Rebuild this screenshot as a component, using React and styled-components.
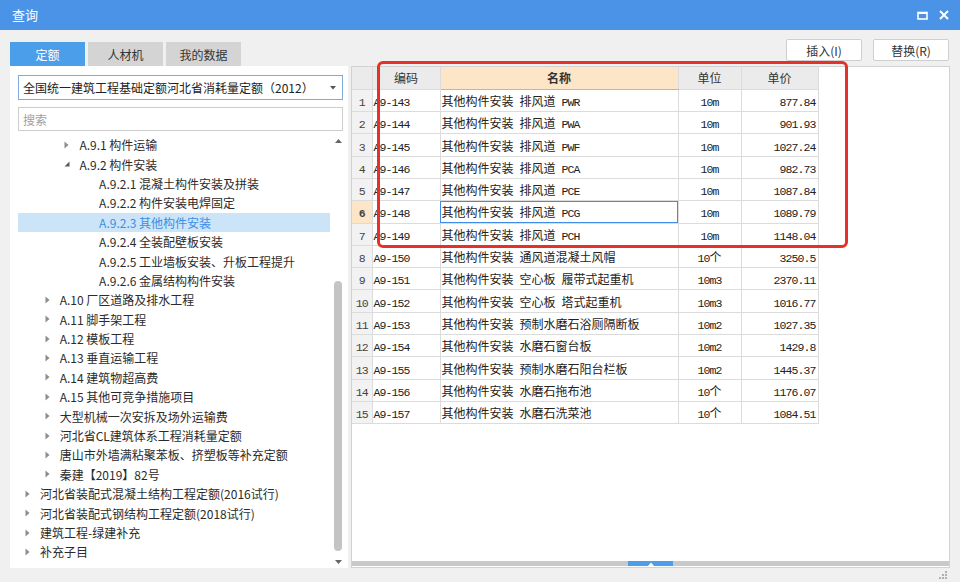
import React from "react";
import styled, { createGlobalStyle } from "styled-components";

const GlobalStyle = createGlobalStyle`
  html, body {
    margin: 0;
    padding: 0;
    background: #f0f0f0;
  }
  body {
    font-family: "Noto Sans CJK SC", "Noto Sans", sans-serif;
    font-size: 12px;
    color: #333;
  }
  * {
    box-sizing: border-box;
  }
`;

const Window = styled.div`
  position: relative;
  width: 960px;
  height: 582px;
  display: flex;
  flex-direction: column;
  background: #f0f0f0;
  overflow: hidden;
`;

const TitleBar = styled.header`
  flex: 0 0 30px;
  display: flex;
  align-items: center;
  padding: 0 11px 0 12px;
  background: #4a93e6;
  color: #fff;
  h1 {
    flex: 1;
    margin: 0;
    font-size: 13px;
    font-weight: 400;
    line-height: 30px;
  }
  .controls {
    display: flex;
    align-items: center;
    gap: 11px;
  }
`;

const Body = styled.div`
  flex: 1;
  display: flex;
  flex-direction: column;
  padding: 0 10px 0 10px;
`;

const TopRow = styled.div`
  flex: 0 0 36px;
  display: flex;
  justify-content: space-between;
`;

const Tabs = styled.nav`
  display: flex;
  align-items: flex-end;
  gap: 3px;
`;

const Tab = styled.div`
  width: 75px;
  height: 24px;
  display: flex;
  align-items: center;
  justify-content: center;
  font-size: 12px;
  background: ${(p) => (p.$active ? "#4a9eea" : "#d4d4d4")};
  color: ${(p) => (p.$active ? "#fff" : "#333")};
`;

const Actions = styled.div`
  display: flex;
  gap: 11px;
  padding-top: 9px;
  padding-right: 1px;
`;

const Button = styled.button`
  width: 76px;
  height: 22px;
  padding: 0;
  border: 1px solid #cfcfcf;
  border-radius: 2px;
  background: #fff;
  color: #333;
  font-family: inherit;
  font-size: 12px;
`;

const Main = styled.div`
  flex: 0 0 502px;
  display: flex;
  gap: 3px;
`;

const LeftPanel = styled.section`
  flex: 0 0 338px;
  display: flex;
  flex-direction: column;
  padding: 9px 5px 0 8px;
  background: #fff;
`;

const Select = styled.div`
  height: 25px;
  display: flex;
  align-items: center;
  justify-content: space-between;
  padding: 0 6px 0 4px;
  border: 1px solid #7eaae2;
  color: #222;
  font-size: 12px;
  svg {
    flex: 0 0 auto;
  }
`;

const Search = styled.div`
  height: 24px;
  margin-top: 7px;
  display: flex;
  align-items: center;
  padding-left: 4px;
  border: 1px solid #cdcdcd;
  color: #a0a0a0;
  font-size: 12px;
`;

const TreeArea = styled.div`
  flex: 1;
  display: flex;
  margin-top: 4px;
  min-height: 0;
`;

const TreeList = styled.ul`
  flex: 1;
  margin: 0;
  padding: 0;
  list-style: none;
  overflow: hidden;
`;

const TreeRow = styled.li`
  height: 19.4px;
  display: flex;
  align-items: center;
  margin-right: 3px;
  padding-left: ${(p) => p.$level * 19.7}px;
  background: ${(p) => (p.$selected ? "#cce4f7" : "transparent")};
  color: ${(p) => (p.$selected ? "#3a8ee6" : "#2b2b2b")};
  font-size: 12px;
  white-space: nowrap;
  .arrow {
    flex: 0 0 22px;
    display: flex;
    align-items: center;
    padding-left: 7px;
  }
`;

const VScroll = styled.div`
  flex: 0 0 10px;
  display: flex;
  flex-direction: column;
  align-items: center;
  .track {
    flex: 1;
    width: 100%;
    display: flex;
    flex-direction: column;
    justify-content: flex-end;
    padding: 0 1px 5px;
  }
  .thumb {
    height: 270px;
    border-radius: 4px;
    background: #c4c4c4;
  }
  .btn {
    flex: 0 0 12px;
    display: flex;
    align-items: center;
    justify-content: center;
  }
`;

const RightPanel = styled.section`
  flex: 1;
  display: flex;
  flex-direction: column;
  border: 1px solid #d2d2d2;
  background: #fff;
`;

const GridWrap = styled.div`
  flex: 1;
`;

const Grid = styled.table`
  width: 466px;
  border-collapse: collapse;
  table-layout: fixed;
  tr {
    height: 22.3px;
  }
  th,
  td {
    padding: 0;
    border: 1px solid #dcdcdc;
    white-space: nowrap;
    overflow: hidden;
    font-size: 12px;
  }
  tr:first-child th {
    border-top: 0;
  }
  tr > :first-child {
    border-left: 0;
  }
`;

const HeadCell = styled.th`
  background: ${(p) => (p.$sorted ? "#fde5c8" : "#ebebeb")};
  border-bottom-color: ${(p) => (p.$sorted ? "#9dbbe6" : "#dcdcdc")} !important;
  font-weight: ${(p) => (p.$sorted ? 700 : 400)};
  color: #333;
  text-align: center;
`;

const NumCell = styled.td`
  background: ${(p) => (p.$current ? "#fde5c8" : "#f2f2f2")};
  color: #444;
  text-align: center;
  font-weight: ${(p) => (p.$current ? 700 : 400)};
`;

const Cell = styled.td`
  text-align: ${(p) => p.$align || "left"};
  padding: ${(p) =>
    p.$align === "right" ? "0 2px 0 0" : p.$align === "center" ? "0" : "0 0 0 1px"} !important;
  color: #222;
  outline: ${(p) => (p.$selected ? "1px solid #3f8de6" : "none")};
  outline-offset: -1px;
`;

const Latin = styled.span`
  font-family: "Liberation Mono", "DejaVu Sans Mono", monospace;
  font-size: 11.5px;
  letter-spacing: -0.9px;
`;

const HScroll = styled.div`
  flex: 0 0 5px;
  margin: 0 0 1px;
  display: flex;
  justify-content: center;
  background: #c9c9c9;
  .handle {
    width: 45px;
    display: flex;
    align-items: center;
    justify-content: center;
    background: #4a9eea;
  }
`;

const Footer = styled.div`
  flex: 1;
  display: flex;
  justify-content: flex-end;
  align-items: flex-end;
  padding: 0 3px 3px 0;
`;

const Annotation = styled.div`
  position: absolute;
  left: 377px;
  top: 61px;
  width: 471px;
  height: 187px;
  border: 3px solid #e5312a;
  border-radius: 6px;
  pointer-events: none;
`;

const tree = [
  { level: 2, arrow: "closed", text: "A.9.1 构件运输" },
  { level: 2, arrow: "open", text: "A.9.2 构件安装" },
  { level: 3, text: "A.9.2.1 混凝土构件安装及拼装" },
  { level: 3, text: "A.9.2.2 构件安装电焊固定" },
  { level: 3, text: "A.9.2.3 其他构件安装", selected: true },
  { level: 3, text: "A.9.2.4 全装配壁板安装" },
  { level: 3, text: "A.9.2.5 工业墙板安装、升板工程提升" },
  { level: 3, text: "A.9.2.6 金属结构构件安装" },
  { level: 1, arrow: "closed", text: "A.10 厂区道路及排水工程" },
  { level: 1, arrow: "closed", text: "A.11 脚手架工程" },
  { level: 1, arrow: "closed", text: "A.12 模板工程" },
  { level: 1, arrow: "closed", text: "A.13 垂直运输工程" },
  { level: 1, arrow: "closed", text: "A.14 建筑物超高费" },
  { level: 1, arrow: "closed", text: "A.15 其他可竞争措施项目" },
  { level: 1, arrow: "closed", text: "大型机械一次安拆及场外运输费" },
  { level: 1, arrow: "closed", text: "河北省CL建筑体系工程消耗量定额" },
  { level: 1, arrow: "closed", text: "唐山市外墙满粘聚苯板、挤塑板等补充定额" },
  { level: 1, arrow: "closed", text: "秦建【2019】82号" },
  { level: 0, arrow: "closed", text: "河北省装配式混凝土结构工程定额(2016试行)" },
  { level: 0, arrow: "closed", text: "河北省装配式钢结构工程定额(2018试行)" },
  { level: 0, arrow: "closed", text: "建筑工程-绿建补充" },
  { level: 0, arrow: "closed", text: "补充子目" },
];

const rows = [
  ["A9-143", "其他构件安装 排风道 PWR", "10m", "877.84"],
  ["A9-144", "其他构件安装 排风道 PWA", "10m", "901.93"],
  ["A9-145", "其他构件安装 排风道 PWF", "10m", "1027.24"],
  ["A9-146", "其他构件安装 排风道 PCA", "10m", "982.73"],
  ["A9-147", "其他构件安装 排风道 PCE", "10m", "1087.84"],
  ["A9-148", "其他构件安装 排风道 PCG", "10m", "1089.79"],
  ["A9-149", "其他构件安装 排风道 PCH", "10m", "1148.04"],
  ["A9-150", "其他构件安装 通风道混凝土风帽", "10个", "3250.5"],
  ["A9-151", "其他构件安装 空心板 履带式起重机", "10m3", "2370.11"],
  ["A9-152", "其他构件安装 空心板 塔式起重机", "10m3", "1016.77"],
  ["A9-153", "其他构件安装 预制水磨石浴厕隔断板", "10m2", "1027.35"],
  ["A9-154", "其他构件安装 水磨石窗台板", "10m2", "1429.8"],
  ["A9-155", "其他构件安装 预制水磨石阳台栏板", "10m2", "1445.37"],
  ["A9-156", "其他构件安装 水磨石拖布池", "10个", "1176.07"],
  ["A9-157", "其他构件安装 水磨石洗菜池", "10个", "1084.51"],
];

// ascii runs get the narrow grid font, the rest stays in the CJK face
const mixed = (str) =>
  str
    .split(/([\x20-\x7e]+)/)
    .filter(Boolean)
    .map((part, i) =>
      /^[\x20-\x7e]+$/.test(part) ? <Latin key={i}>{part}</Latin> : <span key={i}>{part}</span>
    );

const Arrow = ({ type }) => {
  if (type === "open") {
    return (
      <svg width="6" height="6" viewBox="0 0 6 6">
        <polygon points="5.5,0.5 5.5,5.5 0.5,5.5" fill="#5a5a5a" />
      </svg>
    );
  }
  if (type === "closed") {
    return (
      <svg width="5" height="8" viewBox="0 0 5 8">
        <polygon points="0.5,0.5 4.5,4 0.5,7.5" fill="#8c8c8c" />
      </svg>
    );
  }
  return null;
};

export default function App() {
  return (
    <>
      <GlobalStyle />
      <Window>
        <TitleBar>
          <h1>查询</h1>
          <div className="controls">
            <svg width="11" height="9" viewBox="0 0 11 9">
              <rect x="1" y="1.5" width="9" height="6.5" fill="none" stroke="#fff" strokeWidth="1.6" />
              <rect x="1" y="1" width="9" height="2" fill="#fff" />
            </svg>
            <svg width="10" height="10" viewBox="0 0 10 10">
              <path d="M1 1 L9 9 M9 1 L1 9" stroke="#fff" strokeWidth="2" />
            </svg>
          </div>
        </TitleBar>
        <Body>
          <TopRow>
            <Tabs>
              <Tab $active>定额</Tab>
              <Tab>人材机</Tab>
              <Tab>我的数据</Tab>
            </Tabs>
            <Actions>
              <Button>插入(I)</Button>
              <Button>替换(R)</Button>
            </Actions>
          </TopRow>
          <Main>
            <LeftPanel>
              <Select>
                <span>全国统一建筑工程基础定额河北省消耗量定额（2012）</span>
                <svg width="6" height="4" viewBox="0 0 6 4">
                  <polygon points="0,0 6,0 3,3.5" fill="#555" />
                </svg>
              </Select>
              <Search>搜索</Search>
              <TreeArea>
                <TreeList>
                  {tree.map((item) => (
                    <TreeRow key={item.text} $level={item.level} $selected={item.selected}>
                      <span className="arrow">
                        <Arrow type={item.arrow} />
                      </span>
                      {item.text}
                    </TreeRow>
                  ))}
                </TreeList>
                <VScroll>
                  <div className="btn">
                    <svg width="7" height="4" viewBox="0 0 7 4">
                      <polygon points="0,4 7,4 3.5,0" fill="#666" />
                    </svg>
                  </div>
                  <div className="track">
                    <div className="thumb" />
                  </div>
                  <div className="btn">
                    <svg width="7" height="4" viewBox="0 0 7 4">
                      <polygon points="0,0 7,0 3.5,4" fill="#666" />
                    </svg>
                  </div>
                </VScroll>
              </TreeArea>
            </LeftPanel>
            <RightPanel>
              <GridWrap>
                <Grid>
                  <colgroup>
                    <col style={{ width: 20 }} />
                    <col style={{ width: 68 }} />
                    <col style={{ width: 238 }} />
                    <col style={{ width: 63 }} />
                    <col style={{ width: 77 }} />
                  </colgroup>
                  <thead>
                    <tr>
                      <HeadCell />
                      <HeadCell>编码</HeadCell>
                      <HeadCell $sorted>名称</HeadCell>
                      <HeadCell>单位</HeadCell>
                      <HeadCell>单价</HeadCell>
                    </tr>
                  </thead>
                  <tbody>
                    {rows.map(([code, name, unit, price], i) => (
                      <tr key={code}>
                        <NumCell $current={i === 5}>
                          <Latin>{i + 1}</Latin>
                        </NumCell>
                        <Cell>{mixed(code)}</Cell>
                        <Cell $selected={i === 5}>{mixed(name)}</Cell>
                        <Cell $align="center">{mixed(unit)}</Cell>
                        <Cell $align="right">{mixed(price)}</Cell>
                      </tr>
                    ))}
                  </tbody>
                </Grid>
              </GridWrap>
              <HScroll>
                <div className="handle">
                  <svg width="6" height="4" viewBox="0 0 6 4">
                    <polygon points="0,4 6,4 3,0.5" fill="#fff" />
                  </svg>
                </div>
              </HScroll>
            </RightPanel>
          </Main>
          <Footer>
            <svg width="8" height="8" viewBox="0 0 8 8">
              <g fill="#b0b0b0">
                <rect x="6" y="0" width="2" height="2" />
                <rect x="3" y="3" width="2" height="2" />
                <rect x="6" y="3" width="2" height="2" />
                <rect x="0" y="6" width="2" height="2" />
                <rect x="3" y="6" width="2" height="2" />
                <rect x="6" y="6" width="2" height="2" />
              </g>
            </svg>
          </Footer>
        </Body>
        <Annotation />
      </Window>
    </>
  );
}
